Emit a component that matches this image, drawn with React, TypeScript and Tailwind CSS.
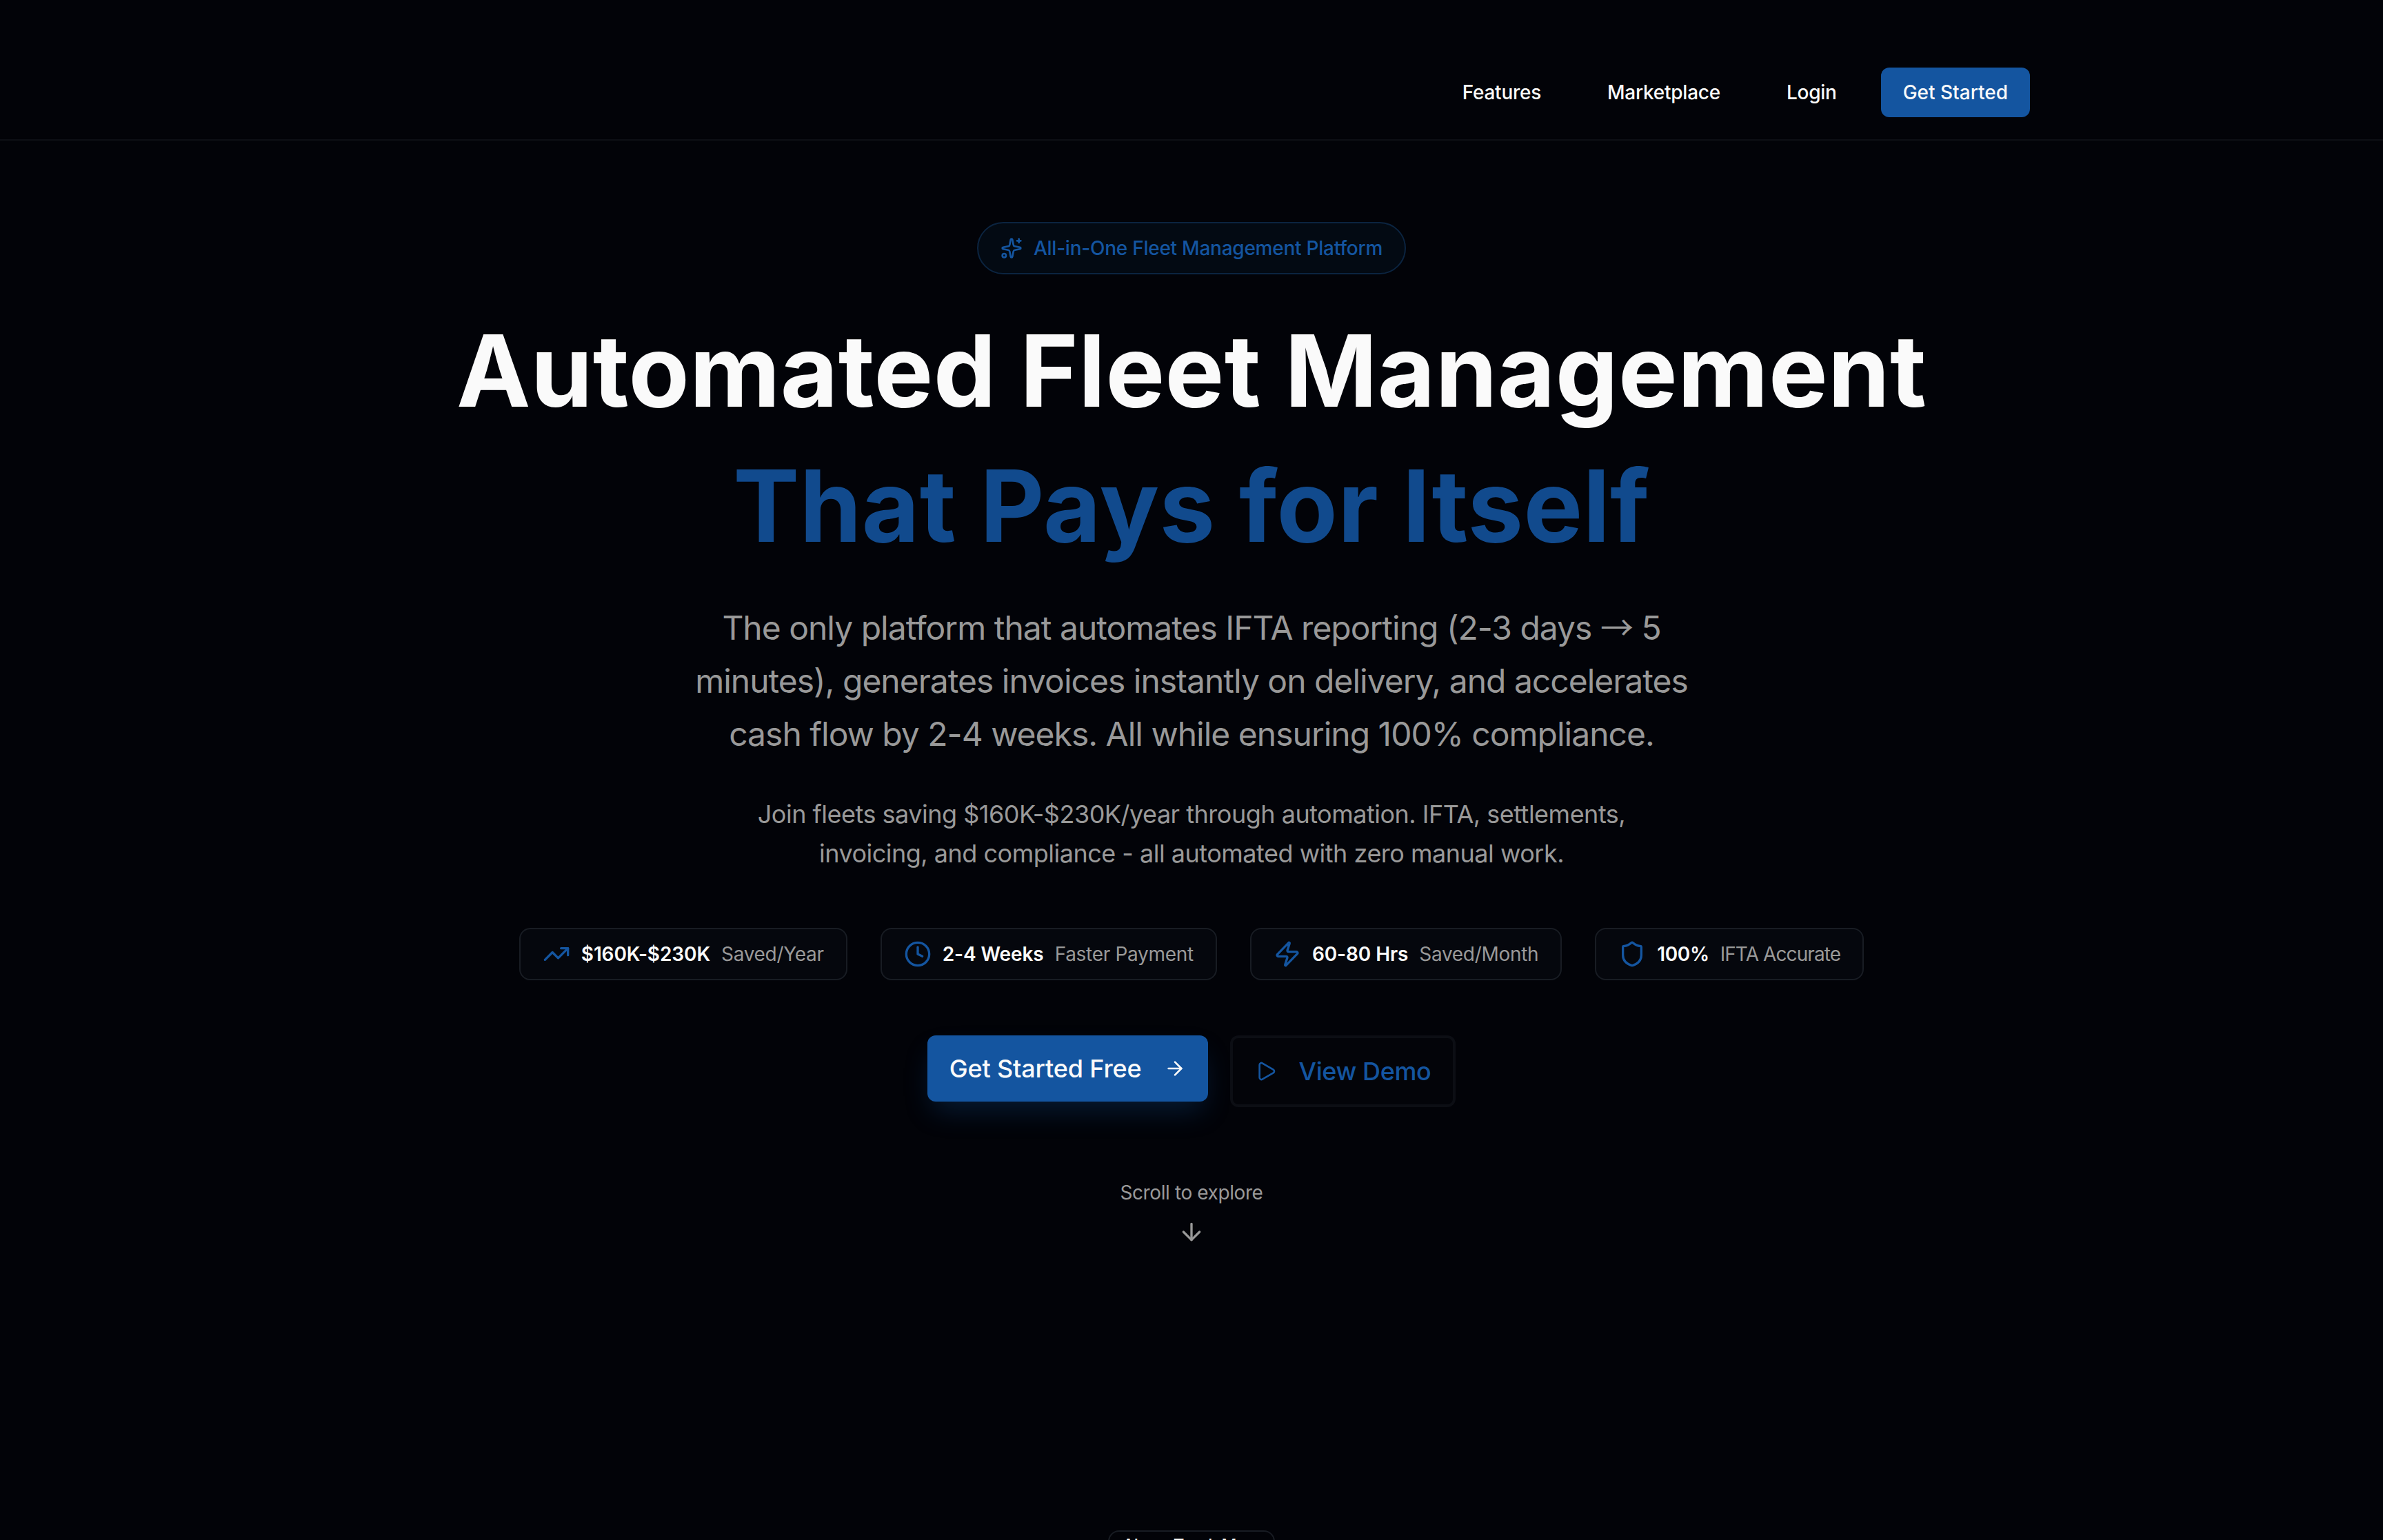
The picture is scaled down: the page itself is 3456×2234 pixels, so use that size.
import { ArrowDown, ArrowRight, Clock, Play, Shield, Sparkles, TrendingUp, Zap } from 'lucide-react';

const stats = [
  { icon: TrendingUp, value: '$160K-$230K', label: 'Saved/Year', valueClass: 'tracking-[-0.1px]', labelClass: 'tracking-[-0.3px]' },
  { icon: Clock, value: '2-4 Weeks', label: 'Faster Payment', valueClass: 'tracking-[-0.1px]', labelClass: 'tracking-[-0.3px]' },
  { icon: Zap, value: '60-80 Hrs', label: 'Saved/Month', valueClass: 'tracking-[-0.1px]', labelClass: 'tracking-[-0.3px]' },
  { icon: Shield, value: '100%', label: 'IFTA Accurate', valueClass: 'tracking-[-0.4px]', labelClass: 'tracking-[-0.9px]' },
];

function Header() {
  return (
    <header className="w-full border-b-2 border-[#0d0f15]">
      <div className="w-[2432px] mx-auto pt-[98px] pb-[32px] flex items-center justify-end gap-[32px] text-[28px] font-medium leading-[72px] text-[#fafafa]">
        <a className="px-[32px] tracking-[-0.25px]">Features</a>
        <a className="px-[32px] tracking-[-0.25px]">Marketplace</a>
        <a className="px-[32px] tracking-[-0.25px]">Login</a>
        <a className="h-[72px] px-[32px] rounded-[12px] bg-[#1455a0]">Get Started</a>
      </div>
    </header>
  );
}

function Hero() {
  return (
    <section className="flex flex-col items-center text-center">
      <div className="mt-[118px] h-[76px] px-[32px] flex items-center gap-[16px] rounded-full border-2 border-[#0b2440] bg-[#030a13] text-[28px] font-medium tracking-[-0.25px] text-[#1455a0]">
        <Sparkles className="w-[32px] h-[32px]" strokeWidth={2} />
        <span>All-in-One Fleet Management Platform</span>
      </div>

      <h1 className="mt-[42px] text-[144px] font-bold leading-[196px] tracking-[0.35px] text-[#fafafa]">
        <span className="block">Automated Fleet Management</span>
        <span className="block text-[#114a8d]">That Pays for Itself</span>
      </h1>

      <p className="mt-[37px] w-[1536px] text-[48px] leading-[77px] tracking-[-1px] text-[#999999]">
        The only platform that automates IFTA reporting (2-3 days <span className="font-['Noto_Sans_CJK_SC']">→</span> 5 minutes), generates invoices instantly on delivery, and accelerates cash flow by 2-4 weeks. All while ensuring 100% compliance.
      </p>
      <p className="mt-[50px] w-[1344px] text-[36px] leading-[57px] tracking-[-0.5px] text-[#999999]">
        Join fleets saving $160K-$230K/year through automation. IFTA, settlements, invoicing, and compliance - all automated with zero manual work.
      </p>

      <div className="mt-[79px] flex items-center gap-[48px]">
        {stats.map((s) => (
          <div key={s.value} className="h-[76px] px-[32px] flex items-center rounded-[16px] border-2 border-[#181c23] bg-[#05070d] text-[28px]">
            <s.icon className="w-[40px] h-[40px] text-[#1455a0] mr-[16px]" strokeWidth={2} />
            <span className={`font-semibold text-[#fafafa] ${s.valueClass}`}>{s.value}</span>
            <span className={`ml-[16px] text-[#999999] ${s.labelClass}`}>{s.label}</span>
          </div>
        ))}
      </div>

      <div className="mt-[80px] flex items-start gap-[32px]">
        <a className="h-[96px] px-[32px] flex items-center gap-[32px] rounded-[12px] bg-[#1455a0] text-[36px] font-medium tracking-[-0.15px] text-[#fafafa] shadow-[0_20px_40px_-8px_rgba(20,85,160,0.3)]">
          Get Started Free
          <ArrowRight className="w-[32px] h-[32px]" strokeWidth={2} />
        </a>
        <a className="h-[104px] px-[32px] flex items-center gap-[32px] rounded-[12px] border-4 border-[#0c0e14] bg-[#030409] text-[36px] font-medium tracking-[-0.4px] text-[#1455a0]">
          <Play className="w-[32px] h-[32px]" strokeWidth={2} />
          View Demo
        </a>
      </div>

      <div className="mt-[103px] flex flex-col items-center gap-[16px] text-[28px] tracking-[-0.4px] text-[#999999]">
        <span>Scroll to explore</span>
        <ArrowDown className="w-[40px] h-[40px]" strokeWidth={2} />
      </div>

      <div className="mt-[413px] px-[19px] py-[8px] rounded-[16px] border-2 border-[#181c23] text-[24px] leading-[24px] font-medium tracking-[-0.3px] text-[#fafafa]">
        About Truck Mate
      </div>
    </section>
  );
}

export default function App() {
  return (
    <div className="h-[2234px] overflow-hidden bg-[#020308] font-['Inter',sans-serif]">
      <Header />
      <Hero />
    </div>
  );
}
